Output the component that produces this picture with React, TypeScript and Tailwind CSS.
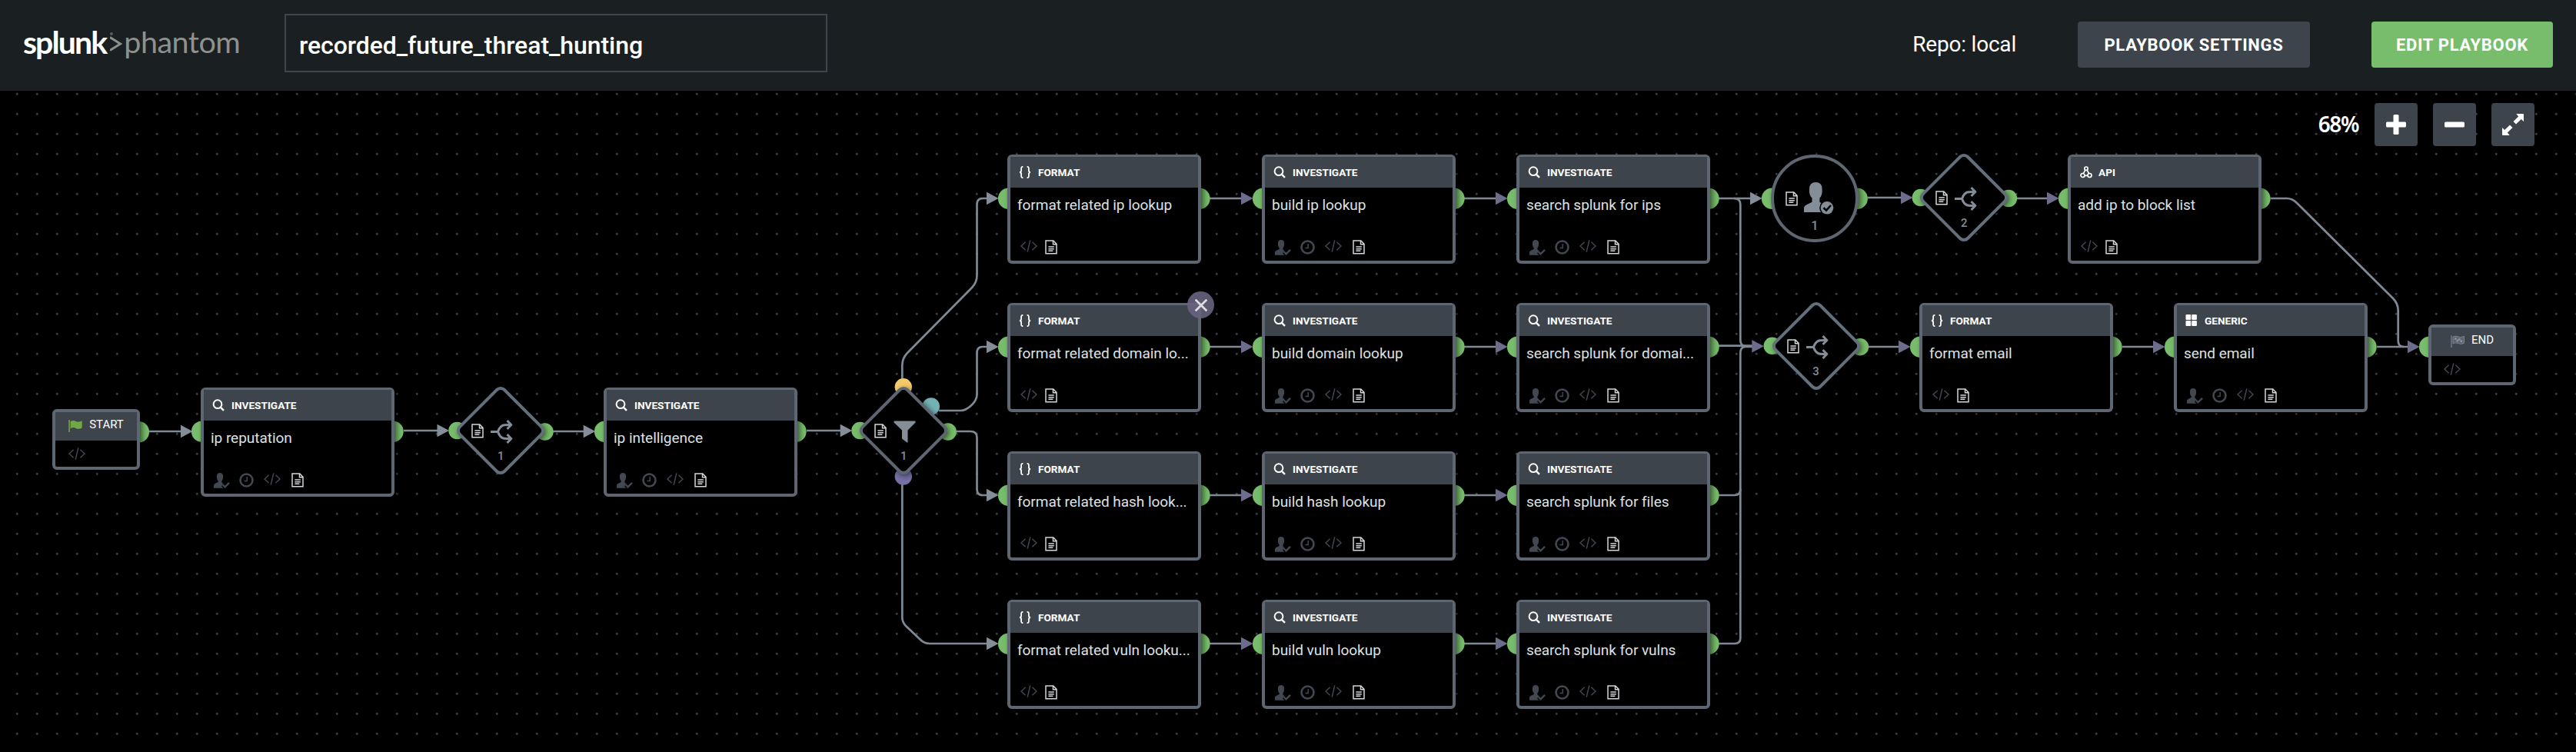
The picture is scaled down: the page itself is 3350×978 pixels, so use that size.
import React from "react";

type Kind = "FORMAT" | "INVESTIGATE" | "API" | "GENERIC";

interface CardData {
  x: number;
  y: number;
  kind: Kind;
  label: string;
  closable?: boolean;
}

const ROWS = [201, 394, 587, 780];

const CARDS: CardData[] = [
  { x: 261, y: 504, kind: "INVESTIGATE", label: "ip reputation" },
  { x: 785, y: 504, kind: "INVESTIGATE", label: "ip intelligence" },
  { x: 1310, y: ROWS[0], kind: "FORMAT", label: "format related ip lookup" },
  { x: 1310, y: ROWS[1], kind: "FORMAT", label: "format related domain lo...", closable: true },
  { x: 1310, y: ROWS[2], kind: "FORMAT", label: "format related hash look..." },
  { x: 1310, y: ROWS[3], kind: "FORMAT", label: "format related vuln looku..." },
  { x: 1641, y: ROWS[0], kind: "INVESTIGATE", label: "build ip lookup" },
  { x: 1641, y: ROWS[1], kind: "INVESTIGATE", label: "build domain lookup" },
  { x: 1641, y: ROWS[2], kind: "INVESTIGATE", label: "build hash lookup" },
  { x: 1641, y: ROWS[3], kind: "INVESTIGATE", label: "build vuln lookup" },
  { x: 1972, y: ROWS[0], kind: "INVESTIGATE", label: "search splunk for ips" },
  { x: 1972, y: ROWS[1], kind: "INVESTIGATE", label: "search splunk for domai..." },
  { x: 1972, y: ROWS[2], kind: "INVESTIGATE", label: "search splunk for files" },
  { x: 1972, y: ROWS[3], kind: "INVESTIGATE", label: "search splunk for vulns" },
  { x: 2689, y: ROWS[0], kind: "API", label: "add ip to block list" },
  { x: 2496, y: ROWS[1], kind: "FORMAT", label: "format email" },
  { x: 2827, y: ROWS[1], kind: "GENERIC", label: "send email" },
];

const EDGES: string[] = [
  "M194 561H236",
  "M525 560H570",
  "M719 561H760",
  "M1049 560H1094",
  "M1173.3 494V475Q1173.3 466 1180 459L1264 374Q1270.5 367 1270.5 358V266Q1270.5 258 1278 258H1285",
  "M1221 534H1249C1258 534 1270.5 523 1270.5 513V459Q1270.5 451 1278 451H1285",
  "M1243 561H1262Q1270.5 561 1270.5 569V636Q1270.5 644 1278 644H1285",
  "M1173.3 630V803Q1173.3 809 1178 814L1197 832Q1202 837 1209 837H1285",
  "M2235 258H2278",
  "M2255 258Q2263.3 258 2263.3 266V442Q2263.3 450 2270 450",
  "M2235 449.6H2280",
  "M2235 644H2256Q2263.3 644 2263.3 636",
  "M2235 837H2256Q2263.3 837 2263.3 830V459Q2263.3 451 2270 451H2280",
  "M2429 257H2474",
  "M2623 258H2664",
  "M2430 451H2471",
  "M2760 451H2802",
  "M3091 451H3133",
  "M2953 258H2974Q2981 258 2987 264L3112 388Q3118.7 395 3118.7 404V443Q3118.7 451 3126 451",
  ...[258, 451, 644, 837].flatMap((y) => [`M1573 ${y}H1616`, `M1904 ${y}H1947`]),
];

const GREY_ARROWS: [number, number][] = [
  [235, 561], [568.5, 560], [758.7, 561], [1092.7, 560],
  [1283, 258], [1283, 451], [1283, 644], [1283, 837], [2276, 258],
];

const PURPLE_ARROWS: [number, number][] = [
  ...[258, 451, 644, 837].flatMap((y): [number, number][] => [[1614, y], [1945, y]]),
  [2278.3, 450.3], [2472, 257], [2662, 258], [2469, 451], [2800, 451], [3131, 451],
];

const SMALL_PORTS: [number, number, string][] = [
  [594.5, 560, "#77bd6b"], [708.5, 561.5, "#77bd6b"],
  [1118.5, 560, "#77bd6b"], [1232.7, 561.5, "#77bd6b"],
  [1174.8, 503.3, "#f4ca6b"], [1210.8, 528.5, "#73b2b3"], [1174.8, 619.6, "#7570a6"],
  [2497.7, 257, "#77bd6b"], [2612, 258, "#77bd6b"],
  [2304.7, 449.8, "#77bd6b"], [2419, 451.2, "#77bd6b"],
];

const LARGE_PORTS: [number, number][] = [
  ...CARDS.flatMap((c): [number, number][] => [[c.x + 1.6, c.y + 57.3], [c.x + 250, c.y + 57.3]]),
  [180.4, 561.7], [3159.6, 451.3], [2304.5, 258.2], [2415.2, 258.2],
];

function Wires() {
  return (
    <svg className="absolute left-0 top-0" width="3350" height="978" viewBox="0 0 3350 978" fill="none">
      {EDGES.map((d) => (
        <path key={d} d={d} stroke="#7f8994" strokeWidth="2.7" />
      ))}
      {LARGE_PORTS.map(([x, y]) => (
        <circle key={`${x}-${y}`} cx={x} cy={y} r="13.7" fill="#77bd6b" />
      ))}
      {SMALL_PORTS.map(([x, y, fill]) => (
        <circle key={`${x}-${y}`} cx={x} cy={y} r="11.2" fill={fill} />
      ))}
      {GREY_ARROWS.map(([x, y]) => (
        <path key={`${x}-${y}`} d={`M${x} ${y - 8.3}L${x + 15.6} ${y}L${x} ${y + 8.3}Z`} fill="#848d98" />
      ))}
      {PURPLE_ARROWS.map(([x, y]) => (
        <path key={`${x}-${y}`} d={`M${x} ${y - 8.3}L${x + 15.6} ${y}L${x} ${y + 8.3}Z`} fill="#6c6c8c" />
      ))}
    </svg>
  );
}

function DocIcon() {
  return (
    <svg className="h-[19px] w-4 shrink-0" viewBox="0 0 16 19" fill="none" stroke="#d3d5d8" strokeWidth="1.5">
      <path d="M1 .9H10.8L15 5.4V17.7H1Z" />
      <path d="M10.5 1V5.7H15" />
      <path d="M4.4 9H11.8M4.4 11.7H11.8M4.4 14.3H10.4" />
    </svg>
  );
}

function CodeIcon() {
  return (
    <svg className="h-4 w-[22px] shrink-0" viewBox="0 0 22 16" fill="none" stroke="#424852" strokeWidth="1.5">
      <path d="M6.6 2.8L1 8L6.6 13.2M15.4 2.8L21 8L15.4 13.2M12.8 .4L9.2 15.6" />
    </svg>
  );
}

function ClockIcon() {
  return (
    <svg className="h-[19px] w-[19px] shrink-0" viewBox="0 0 19 19" fill="none" stroke="#424852">
      <circle cx="9.5" cy="9.5" r="8" strokeWidth="2.6" />
      <path d="M10.2 5V10.4H6.4" strokeWidth="1.5" />
    </svg>
  );
}

function UserIcon() {
  return (
    <svg className="h-5 w-[21px] shrink-0" viewBox="0 0 21 20">
      <path
        d="M4 3.6Q4.200 0 8 0Q11.800 0 12 3.600V6.500Q11.900 9 10.400 10.200V12.600L12.200 13.900L15.500 19.800H0V16Q.200 14.400 2 13.700L5.700 12.100V10.200Q4.100 9 4 6.500Z"
        fill="#424852"
      />
      <path d="M11.600 15.700L14.500 18.500L19.900 12.800" fill="none" stroke="#000" strokeWidth="4.600" />
      <path d="M11.800 15.500L14.500 18.300L20 12.800" fill="none" stroke="#424852" strokeWidth="2.400" />
    </svg>
  );
}

function KindIcon({ kind }: { kind: Kind }) {
  if (kind === "INVESTIGATE") {
    return (
      <svg className="h-4 w-4" viewBox="0 0 16 16" fill="none" stroke="#fff">
        <circle cx="7" cy="6.700" r="5.400" strokeWidth="2" />
        <path d="M10.700 10.600L15 14.900" strokeWidth="2.400" />
      </svg>
    );
  }
  if (kind === "FORMAT") {
    return (
      <svg className="h-4 w-4" viewBox="0 0 16 16" fill="none" stroke="#fff" strokeWidth="1.800">
        <path d="M5.400 .9Q3.100 .7 3.100 3V5.800Q3.100 7.800 1 8Q3.100 8.200 3.100 10.200V13Q3.100 15.300 5.400 15.100" />
        <path d="M10.600 .9Q12.900 .7 12.900 3V5.800Q12.900 7.800 15 8Q12.900 8.200 12.900 10.200V13Q12.900 15.300 10.600 15.100" />
      </svg>
    );
  }
  if (kind === "API") {
    return (
      <svg className="ml-px h-4 w-4" viewBox="0 0 16 16" fill="none" stroke="#fff" strokeWidth="1.700">
        <circle cx="8" cy="3.200" r="2.200" />
        <circle cx="3.500" cy="12" r="2.500" />
        <circle cx="12.500" cy="12" r="2.500" />
        <path d="M6.900 5.200L4.400 9.600M9.100 5.200L11.600 9.600M6 12.300H10" />
      </svg>
    );
  }
  return (
    <svg className="h-4 w-4" viewBox="0 0 16 16" fill="#fff">
      <rect x=".5" y="0" width="6.700" height="7" rx="1" />
      <rect x="8.200" y="0" width="6.700" height="7" rx="1" />
      <rect x=".5" y="8" width="6.700" height="7" rx="1" />
      <rect x="8.200" y="8" width="6.700" height="7" rx="1" />
    </svg>
  );
}

function Card({ x, y, kind, label, closable }: CardData) {
  const full = kind === "INVESTIGATE" || kind === "GENERIC";
  return (
    <div
      className="absolute flex h-[142px] w-[252px] flex-col rounded-[6px] border-4 border-t-[3px] border-[#5e6672] bg-black shadow-[3px_2px_7px_rgba(0,0,0,0.55)]"
      style={{ left: x, top: y }}
    >
      <div className="flex h-10 shrink-0 items-center bg-[#3e444c] pl-[11px]">
        <div className="w-[25px]">
          <KindIcon kind={kind} />
        </div>
        <span className="text-[13.6px] leading-4 font-bold text-white">{kind}</span>
      </div>
      <div className="mt-3 whitespace-nowrap pl-[9px] text-[19.04px] leading-[22px] tracking-[-0.05px] text-[#dfe0e2]">
        {label}
      </div>
      <div className="mt-[34px] flex items-start pl-[13px]">
        {full && (
          <div className="mr-[13px] flex gap-3">
            <UserIcon />
            <ClockIcon />
          </div>
        )}
        <CodeIcon />
        <div className={full ? "ml-[14px]" : "ml-[10px]"}>
          <DocIcon />
        </div>
      </div>
      {closable && (
        <div className="absolute -right-[21px] -top-[18px] flex h-[35px] w-[35px] items-center justify-center rounded-full bg-[#686380]/90">
          <svg className="h-4 w-4" viewBox="0 0 16 16" stroke="#dedee2" strokeWidth="2.700">
            <path d="M.6 .6L15.400 15.400M15.400 .6L.6 15.400" />
          </svg>
        </div>
      )}
    </div>
  );
}

function Terminal({ x, y, label, end }: { x: number; y: number; label: string; end?: boolean }) {
  return (
    <div
      className="absolute flex h-[79px] w-[114px] flex-col rounded-[6px] border-4 border-[#5e6672] bg-black shadow-[3px_2px_7px_rgba(0,0,0,0.55)]"
      style={{ left: x, top: y }}
    >
      <div className="flex h-[37px] shrink-0 items-center justify-center gap-[9px] bg-[#3e444c] pb-[6px]">
        {end ? (
          <svg className="mt-[5px] h-4 w-[18px]" viewBox="0 0 18 16">
            <path d="M1 .3V16" stroke="#717a85" strokeWidth="1.500" />
            <path d="M3 2Q6.500 .2 9.700 1.900Q13.500 3.600 17.500 1.400V10.200Q13.500 12.400 9.700 10.600Q6.500 9 3 10.800Z" fill="#5c646f" stroke="#7b848f" strokeWidth="1" />
            <path d="M5 3.200h2.600v2.600H5zM10 4.200h2.600v2.600H10zM7.500 5.800h2.500v2.600H7.500zM12.600 6.500h2.600v2.600h-2.600z" fill="#8b949e" />
          </svg>
        ) : (
          <svg className="mt-[5px] h-4 w-[18px]" viewBox="0 0 18 16" fill="#73a944">
            <path d="M.3 0H1.800V16H.3Z" />
            <path d="M2.600 2Q6.500 0 9.700 1.900Q13.500 3.600 17.700 1.200V10.400Q13.500 12.800 9.700 10.900Q6.500 9.200 2.600 11.200Z" />
          </svg>
        )}
        <span className="text-[14.96px] leading-4 text-white">{label}</span>
      </div>
      <div className={end ? "mt-[9px] pl-4" : "mt-[9px] pl-[17px]"}>
        <CodeIcon />
      </div>
    </div>
  );
}

function SplitIcon() {
  return (
    <svg className="h-[31px] w-[29px]" viewBox="0 0 29 31" fill="none" stroke="#848d98" strokeWidth="3">
      <path d="M0 15.500H9.500Q11.500 9.500 15.500 7.400Q17.500 6.300 26.500 6.500M9.500 15.500Q11.500 21.500 15.500 23.600Q17.500 24.700 26.500 24.500" />
      <path d="M21.500 1L26.800 6.500L21.500 12M21.500 19L26.800 24.500L21.500 30" strokeLinejoin="round" />
    </svg>
  );
}

function FunnelIcon() {
  return (
    <svg className="h-[31px] w-[29px]" viewBox="0 0 29 31" fill="#848d98">
      <path d="M.5 1.500H28.500V3.500L18.500 13.500V29.500H17.500L11 24.500V13.500L.5 3.500Z" />
    </svg>
  );
}

function Diamond({ cx, cy, num, filter }: { cx: number; cy: number; num: string; filter?: boolean }) {
  return (
    <div className="absolute h-[86px] w-[86px]" style={{ left: cx - 43, top: cy - 43 }}>
      <div
        className={
          filter
            ? "absolute inset-0 rotate-45 rounded-[9px] border-4 border-[#5e6672] bg-black shadow-[3px_0px_7px_rgba(0,0,0,0.55)]"
            : "absolute inset-0 rotate-45 rounded-[9px] border-4 border-[#646f7d] bg-black shadow-[3px_0px_7px_rgba(0,0,0,0.55)]"
        }
      />
      <div className="relative flex h-full w-full flex-col items-center pt-[29px]">
        <div className="flex items-center gap-[9px] pr-[21.5px]">
          <div className="pb-[2px]">
            <DocIcon />
          </div>
          {filter ? <FunnelIcon /> : <SplitIcon />}
        </div>
        <span className="mt-2 text-[14.96px] leading-4 font-medium text-[#848d98]">{num}</span>
      </div>
    </div>
  );
}

function Prompt() {
  return (
    <div className="absolute left-[2303px] top-[201px] flex h-[114px] w-[114px] flex-col items-center rounded-full border-4 border-[#5e6672] bg-black pt-[32px] shadow-[3px_0px_7px_rgba(0,0,0,0.55)]">
      <div className="flex items-center gap-[8px] pr-[14px]">
        <DocIcon />
        <svg className="h-[42px] w-[39px]" viewBox="0 0 39 42">
          <path
            d="M7 8.500Q7.200 0 15.300 0Q23.400 0 23.600 8.500V13Q23.200 18 20.400 20.500V26L27.500 29V39H0V33.500Q.3 30.500 3.500 29.200L10.500 25.700V20.500Q7.400 18 7 13Z"
            fill="#848d98"
          />
          <circle cx="30" cy="33.300" r="9.800" fill="#000" />
          <circle cx="30" cy="33.300" r="8.300" fill="#848d98" />
          <path d="M25.500 33.200L29 36.600L35 30" fill="none" stroke="#000" strokeWidth="2.600" />
        </svg>
      </div>
      <span className="mt-[5px] text-[16.5px] leading-5 font-medium text-[#848d98]">1</span>
    </div>
  );
}

function Header() {
  return (
    <header className="flex h-[118px] items-center bg-[#1a1f22] pl-[30px] pr-[30px] text-white">
      <div className="mb-[10px] flex h-[56px] w-[340px] items-center font-['Lato']">
        <span className="text-[41px] leading-none font-bold tracking-[-1.9px]">splunk</span>
        <svg className="ml-[5px] h-[26px] w-4 shrink-0" viewBox="0 0 16 26" fill="none">
          <circle cx="2" cy="3" r="2" fill="#5a5d5c" />
          <path d="M0 7.500L13.500 16L0 24.500" stroke="#8d8f8b" strokeWidth="3" />
        </svg>
        <span className="ml-[2px] text-[39.5px] leading-none tracking-[-0.5px] text-[#8f918d]">phantom</span>
      </div>
      <div className="mb-[6px] flex h-[76px] w-[706px] items-center border-2 border-[#3f454d] pl-[17px] pt-[5px] text-[32px] font-medium tracking-[-0.05px]">
        recorded_future_threat_hunting
      </div>
      <div className="mb-[2px] ml-auto flex items-center">
        <span className="text-[28px] tracking-[-0.2px]">Repo: local</span>
        <button className="ml-20 h-[60px] w-[302px] rounded-[4px] bg-[#3e444c] text-[22px] font-bold tracking-[0.7px]">
          PLAYBOOK SETTINGS
        </button>
        <button className="ml-20 h-[60px] w-[236px] rounded-[4px] bg-[#77bd6b] text-[22px] font-bold tracking-[0.7px]">
          EDIT PLAYBOOK
        </button>
      </div>
    </header>
  );
}

function ZoomControls() {
  const button = "flex h-14 w-14 items-center justify-center rounded-[4px] bg-[#3e444c]";
  return (
    <div className="absolute right-[54px] top-[134px] flex items-center">
      <span className="mr-[21px] pb-[2px] font-['Noto_Sans'] text-[28px] leading-none font-semibold tracking-[-1.4px] text-white">
        68%
      </span>
      <div className="flex gap-5">
        <button className={button}>
          <svg className="h-[26px] w-[26px]" viewBox="0 0 26 26" fill="#fff">
            <rect x="0" y="9.500" width="26" height="7" rx="1.500" />
            <rect x="9.500" y="0" width="7" height="26" rx="1.500" />
          </svg>
        </button>
        <button className={button}>
          <svg className="h-[26px] w-[26px]" viewBox="0 0 26 26" fill="#fff">
            <rect x="0" y="9.500" width="26" height="7" rx="1.500" />
          </svg>
        </button>
        <button className={button}>
          <svg className="h-7 w-7" viewBox="0 0 28 28" fill="#fff">
            <path d="M18.300 0H27Q28 0 28 1V10L24.800 7L18 13.600L14.500 10L21.200 3.400Z" />
            <path d="M9.700 28H1Q0 28 0 27V18L3.200 21L10 14.400L13.500 18L6.800 24.600Z" />
          </svg>
        </button>
      </div>
    </div>
  );
}

export default function App() {
  return (
    <div className="relative h-[978px] w-[3350px] overflow-hidden bg-black font-['Roboto',sans-serif]">
      <Header />
      <main className="h-[860px] bg-[radial-gradient(circle_at_center,#54595f_0,#4a4f55_0.8px,transparent_1.8px)] bg-[size:26px_26px] bg-[position:9.300px_17.300px]" />
      <Wires />
      {CARDS.map((card) => (
        <Card key={card.label} {...card} />
      ))}
      <Terminal x={68} y={532} label="START" />
      <Terminal x={3158} y={422} label="END" end />
      <Diamond cx={651.2} cy={560} num="1" />
      <Diamond cx={1175.2} cy={560.3} num="1" filter />
      <Diamond cx={2554.3} cy={256.7} num="2" />
      <Diamond cx={2361.6} cy={449.5} num="3" />
      <Prompt />
      <ZoomControls />
    </div>
  );
}
